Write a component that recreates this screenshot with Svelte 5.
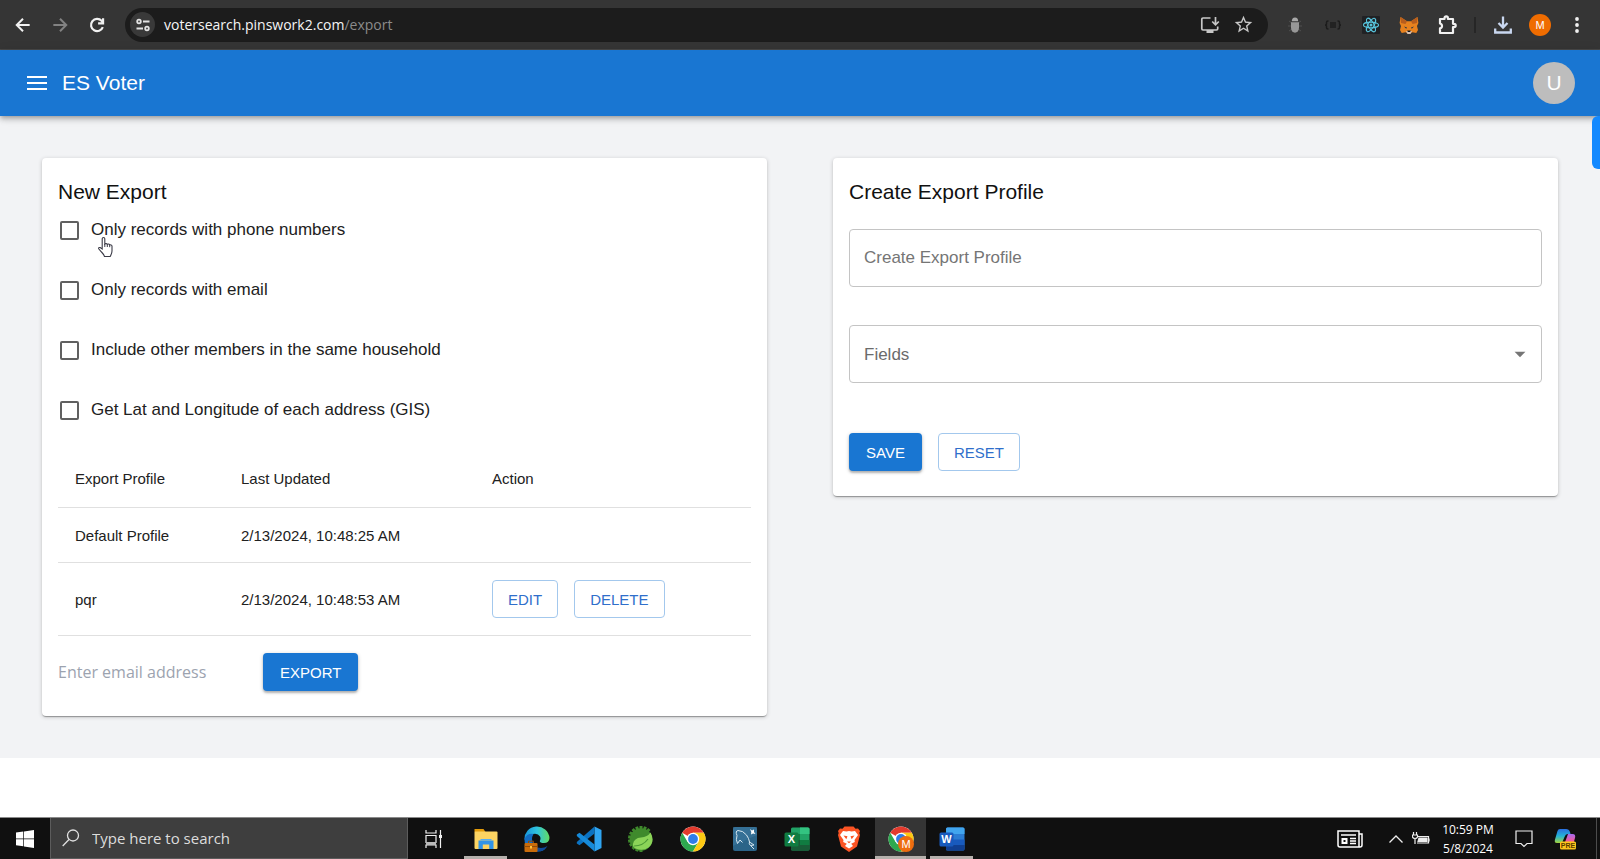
<script lang="ts">
  interface Profile {
    id: number;
    name: string;
    updated: string;
    editable: boolean;
  }

  let options = $state([
    { id: 'phone', label: 'Only records with phone numbers', checked: false },
    { id: 'email', label: 'Only records with email', checked: false },
    { id: 'household', label: 'Include other members in the same household', checked: false },
    { id: 'gis', label: 'Get Lat and Longitude of each address (GIS)', checked: false },
  ]);

  let profiles = $state<Profile[]>([
    { id: 1, name: 'Default Profile', updated: '2/13/2024, 10:48:25 AM', editable: false },
    { id: 2, name: 'pqr', updated: '2/13/2024, 10:48:53 AM', editable: true },
  ]);

  let email = $state('');
  let profileName = $state('');
  let field = $state('');

  const petals = [0, 60, 120];
  const teeth = Array.from({ length: 12 }, (_, i) => 180 + i * 20);

  function reset() {
    profileName = '';
    field = '';
  }

  function editProfile(p: Profile) {
    profileName = p.name;
  }

  function deleteProfile(id: number) {
    profiles = profiles.filter((p) => p.id !== id);
  }
</script>

{#snippet chromeLogo()}
  <circle cx="13" cy="13" r="12.5" fill="#fff" />
  <path d="M13 13 2.2 6.7A12.5 12.5 0 0 1 23.8 6.7H13z" fill="#e33b2e" />
  <path d="M2.2 6.7A12.5 12.5 0 0 0 13 25.5L18.4 16.2 13 13 7.6 16.1z" fill="#2da94f" />
  <path d="M23.8 6.7A12.5 12.5 0 0 1 13 25.5L18.5 16 13 6.8z" fill="#fdc913" />
  <circle cx="13" cy="13" r="6.2" fill="#fff" />
  <circle cx="13" cy="13" r="4.9" fill="#2f7de9" />
{/snippet}

<div class="screen">
  <header class="browser">
    <nav class="nav-buttons" aria-label="Browser">
      <button class="icon-btn" aria-label="Back">
        <svg viewBox="0 0 24 24" width="20" height="20" fill="none" stroke="#f1f1f1" stroke-width="2.4"><path d="M20 12H5M12 4.5 4.5 12l7.5 7.5" /></svg>
      </button>
      <button class="icon-btn" aria-label="Forward">
        <svg viewBox="0 0 24 24" width="20" height="20" fill="none" stroke="#828282" stroke-width="2.4"><path d="M4 12h15M12 4.5 19.5 12 12 19.5" /></svg>
      </button>
      <button class="icon-btn" aria-label="Reload">
        <svg viewBox="0 0 24 24" width="20" height="20" fill="none" stroke="#f1f1f1" stroke-width="2.6"><path d="M19 14.5A7.3 7.3 0 1 1 17.5 7l1.5 1.8M19.3 4v6h-6" /></svg>
      </button>
    </nav>
    <div class="address">
      <button class="site-info" aria-label="View site information">
        <svg viewBox="0 0 16 16" width="16" height="16" fill="none" stroke="#e3e3e3" stroke-width="1.8"><circle cx="4" cy="4.5" r="1.8" /><path d="M8 4.5h6.5M1.5 11.5H8" /><circle cx="12" cy="11.5" r="1.8" /></svg>
      </button>
      <span class="url">votersearch.pinswork2.com<span class="path">/export</span></span>
      <button class="icon-btn" aria-label="Install app">
        <svg viewBox="0 0 20 20" width="20" height="20" fill="none" stroke="#c7c7c7" stroke-width="1.7"><path d="M10.5 3H3q-1.200 0-1.200 1.200v9.600Q1.800 15 3 15h13.500q1.200 0 1.200-1.200V11.500M15.500 2v7.500M12.200 6.500l3.300 3.300 3.300-3.300" /><path d="M6.500 16.500h7" stroke-width="3" /></svg>
      </button>
      <button class="icon-btn" aria-label="Bookmark this tab">
        <svg viewBox="0 0 24 24" width="21" height="21" fill="#c7c7c7"><path d="M22 9.240l-7.190-.62L12 2 9.190 8.630 2 9.240l5.460 4.730L5.820 21 12 17.270 18.180 21l-1.630-7.030L22 9.240zM12 15.400l-3.760 2.270 1-4.280-3.320-2.880 4.380-.38L12 6.100l1.710 4.040 4.380.38-3.320 2.880 1 4.280L12 15.400z" /></svg>
      </button>
    </div>
    <div class="extensions">
      <button class="icon-btn" aria-label="Debugger">
        <svg viewBox="0 0 20 20" width="20" height="20"><path d="M4 6l3 2M16 6l-3 2M3 11h4M17 11h-4M4 16l3-2M16 16l-3-2" stroke="#505050" /><path d="M6.800 6.200a3.200 3.800 0 0 1 6.400 0z" fill="#a8a8a8" /><path d="M6 7.200h8v5.500a4 5 0 0 1-8 0z" fill="#979797" /></svg>
      </button>
      <button class="icon-btn" aria-label="JSON formatter">
        <svg viewBox="0 0 20 20" width="20" height="20" fill="none" stroke="#1c1c1c" stroke-width="1.5"><path d="M5.500 6H5q-1.500 0-1.500 1.500V9q0 1-1.500 1 1.500 0 1.500 1v1.500Q3.500 14 5 14h.5M14.500 6h.5q1.500 0 1.500 1.500V9q0 1 1.500 1-1.500 0-1.500 1v1.500q0 1.500-1.500 1.500h-.5M7 8h6M7 10h6M7 12h6" /></svg>
      </button>
      <button class="icon-btn" aria-label="React developer tools">
        <svg viewBox="0 0 18 18" width="18" height="18"><rect width="18" height="18" rx="1" fill="#202124" />
          <g fill="none" stroke="#58c4dc" stroke-width="1.1">
            {#each petals as angle}
              <ellipse cx="9" cy="9" rx="7.6" ry="2.9" transform="rotate({angle} 9 9)" />
            {/each}
          </g>
          <circle cx="9" cy="9" r="1.5" fill="#58c4dc" />
        </svg>
      </button>
      <button class="icon-btn" aria-label="Wallet">
        <svg viewBox="0 0 20 20" width="20" height="20"><path d="M1.500 2 8 6.200h4L18.500 2l.9 6-1.400 3 1 4-1.700 3-4-.8-1.800 1.400H8.500L6.700 17.200l-4 .8L1 15l1-4-1.400-3z" fill="#e8821e" /><path d="M1.500 2 8 6.200 6.500 9 2 8zM18.500 2 12 6.200 13.500 9 18 8z" fill="#b85d1c" /><path d="m5 11.500 3 1-.8 1.200zM15 11.500l-3 1 .8 1.200z" fill="#233447" /><path d="M7 16h6l-1.500 3h-3z" fill="#d5bfb2" /><path d="M8.300 15.500h3.400l-.5 1.500H8.800z" fill="#161616" /></svg>
      </button>
      <button class="icon-btn" aria-label="Extensions">
        <svg viewBox="0 0 22 22" width="22" height="22" fill="none" stroke="#f1f1f1" stroke-width="2.2" stroke-linejoin="round"><path d="M4 5h4.500V4a1.700 1.700 0 0 1 3.400 0v1H17v4.800h1a1.700 1.700 0 0 1 0 3.400h-1V19H4v-4.600a2.500 2.500 0 0 0 0-4.900z" /></svg>
      </button>
    </div>
    <span class="divider"></span>
    <div class="browser-menu">
      <button class="icon-btn" aria-label="Downloads">
        <svg viewBox="0 0 20 20" width="20" height="20" fill="none" stroke="#c9d7f0" stroke-width="2.3"><path d="M10 1.500v10.500M5.500 8l4.500 4.500L14.500 8M2.200 13.500v4h15.600v-4" /></svg>
      </button>
      <button class="profile" aria-label="Profile">M</button>
      <button class="icon-btn" aria-label="More">
        <svg viewBox="0 0 20 20" width="20" height="20" fill="#f1f1f1"><circle cx="10" cy="4" r="1.900" /><circle cx="10" cy="10" r="1.900" /><circle cx="10" cy="16" r="1.900" /></svg>
      </button>
    </div>
  </header>

  <header class="app-bar">
    <button class="icon-btn" aria-label="Open menu">
      <svg viewBox="0 0 20 14" width="20" height="14" fill="#fff"><path d="M0 0h20v2H0zM0 6h20v2H0zM0 12h20v2H0z" /></svg>
    </button>
    <h1>ES Voter</h1>
    <button class="user" aria-label="User account">U</button>
    <span class="side-tab"></span>
  </header>

  <main>
    <section class="card">
      <h2>New Export</h2>
      <div class="options">
        {#each options as opt (opt.id)}
          <label class="option">
            <input type="checkbox" bind:checked={opt.checked} />
            <span>{opt.label}</span>
          </label>
        {/each}
        <svg class="pointer" viewBox="0 0 17 22" width="17" height="22"><path d="M5.200 13V2.800a1.300 1.300 0 0 1 2.600 0V8q1.300-1.300 2.500.4 1.300-1 2.400.5 1.700-.6 2.300 1v5q0 2.500-1.800 5.600H7.500q-1-2.500-3-4.500L1.700 12.800q-.5-1.600 1.500-1.300z" fill="#fff" stroke="#3a3a46" stroke-width="1.1" /><path d="M7.800 8v3M10.300 8.400V11M12.700 9v2.200" stroke="#3a3a46" /></svg>
      </div>

      <table>
        <thead>
          <tr>
            <th class="col-name">Export Profile</th>
            <th class="col-date">Last Updated</th>
            <th>Action</th>
          </tr>
        </thead>
        <tbody>
          {#each profiles as p (p.id)}
            <tr>
              <td>{p.name}</td>
              <td>{p.updated}</td>
              <td>
                {#if p.editable}
                  <div class="actions">
                    <button class="btn outlined" onclick={() => editProfile(p)}>EDIT</button>
                    <button class="btn outlined" onclick={() => deleteProfile(p.id)}>DELETE</button>
                  </div>
                {/if}
              </td>
            </tr>
          {/each}
        </tbody>
      </table>

      <form class="export-form" onsubmit={(e) => e.preventDefault()}>
        <input type="email" bind:value={email} placeholder="Enter email address" aria-label="Email address" />
        <button class="btn contained">EXPORT</button>
      </form>
    </section>

    <section class="card">
      <h2>Create Export Profile</h2>
      <form class="profile-form" onsubmit={(e) => e.preventDefault()}>
        <input class="field" type="text" bind:value={profileName} placeholder="Create Export Profile" aria-label="Profile name" />
        <div class="select-wrap">
          <select class="field" bind:value={field} aria-label="Fields">
            <option value="">Fields</option>
          </select>
          <svg class="caret" viewBox="0 0 24 24" width="26" height="26" fill="#757575"><path d="M7 10l5 5 5-5z" /></svg>
        </div>
        <div class="actions">
          <button class="btn contained">SAVE</button>
          <button class="btn outlined" type="button" onclick={reset}>RESET</button>
        </div>
      </form>
    </section>
  </main>

  <footer class="taskbar">
    <button class="start" aria-label="Start">
      <svg viewBox="0 0 18 18" width="18" height="18" fill="#fff"><path d="M0 2.600 7.300 1.600v7H0zM8 1.500 18 0v8.600H8zM0 9.300h7.300v7L0 15.300zM8 9.300h10V18L8 16.500z" /></svg>
    </button>
    <label class="search">
      <svg viewBox="0 0 18 18" width="18" height="18" fill="none" stroke="#e0e0e0" stroke-width="1.3"><circle cx="11" cy="6.5" r="5.5" /><path d="M7 10.500.7 17" /></svg>
      <input type="text" placeholder="Type here to search" aria-label="Search Windows" />
    </label>
    <div class="apps">
      <button class="app" aria-label="Task view">
        <svg viewBox="0 0 18 18" width="18" height="18" fill="none" stroke="#f0f0f0" stroke-width="1.2"><path d="M1 0v3h10V0M1 18v-3h10v3M1 5.500h10v7H1zM15.500 0v18" /><path d="M1 12h10v3H1z" fill="#bbb" stroke="none" /><path d="M14 5h3v3h-3z" fill="#f0f0f0" stroke="none" /></svg>
      </button>
      <button class="app open" aria-label="File Explorer">
        <svg viewBox="0 0 26 26" width="26" height="26"><path d="M1.500 3h9l2 3H1.500z" fill="#e39b0a" /><rect x="1.500" y="5.500" width="23" height="17.500" rx="1" fill="#fcd462" /><path d="M5.500 23v-8.500h15V23h-4.300v-4.500H9.800V23z" fill="#3294e6" /><path d="M7.500 14.500h11V13h-11z" fill="#56aef3" /></svg>
      </button>
      <button class="app" aria-label="Edge">
        <svg viewBox="0 0 26 26" width="26" height="26">
          <defs><linearGradient id="edge"><stop offset="0" stop-color="#1895dc" /><stop offset=".5" stop-color="#2fc3df" /><stop offset="1" stop-color="#62dd61" /></linearGradient></defs>
          <path d="M.5 14A12.500 12.500 0 1 1 25.500 12q-.3 5-5.500 5-5 0-4-2.500 1-2 0-4Q14 7 9 8 2 10 .5 14z" fill="url(#edge)" />
          <path d="M.5 13Q3 7 9.500 8q-3 5 0 10.500t12.500 4Q18 26 12.500 25.500.5 25 .5 13z" fill="#126dc4" /><path d="M9 14q0 8 8 8 3.500 0 6.500-2-3 5.500-10 5.500Q6 22 9 14z" fill="#104a99" />
          <rect x=".5" y="17" width="13" height="9" rx="1" fill="#c96c0b" /><path d="M4.500 17v-1.800h5V17M.5 20.500h13" stroke="#8e4a09" fill="none" /><path d="M6 20h2v2.500H6z" fill="#ffc23c" />
        </svg>
      </button>
      <button class="app" aria-label="Visual Studio Code">
        <svg viewBox="0 0 26 26" width="26" height="26"><path d="M18.500.5 25.500 4v18l-7 3.500z" fill="#2fa5f2" /><path d="M18.500.5v7L3.500 19.200.8 17.500v-1.400z" fill="#0b72c1" /><path d="M18.500 25.500v-7L3.500 6.800.8 8.500v1.400z" fill="#168ad9" /></svg>
      </button>
      <button class="app" aria-label="Spring Tools">
        <svg viewBox="0 0 26 26" width="26" height="26"><g fill="#3f8a2c">
            {#each teeth as angle}
              <rect x="11.5" y="0" width="3" height="5" transform="rotate({angle} 13 13)" />
            {/each}
          </g><circle cx="13" cy="13.500" r="11.300" fill="#3f8a2c" /><path d="M22.500 6.500q5 9-2 15-5.500 4-13 1-3-1-2.500-4.500 1-6 8-6.500 6.500-.5 9.500-5z" fill="#8bd458" /><path d="M6 20q9 0 14-7" stroke="#4c9a35" stroke-width="1.2" fill="none" /></svg>
      </button>
      <button class="app" aria-label="Chrome">
        <svg viewBox="0 0 26 26" width="26" height="26">{@render chromeLogo()}</svg>
      </button>
      <button class="app" aria-label="MySQL Workbench">
        <svg viewBox="0 0 26 26" width="26" height="26"><rect x="1" y="1" width="24" height="24" rx="2" fill="#2b6488" /><path d="M1 1h24v8L1 20z" fill="#3f7ca3" opacity=".5" /><path d="M5.500 17.500Q3.500 14 5 9.500 3 5 6 4.500q5 0 8.500 4.500 2.500 3.500 3 7l4.500 3-3.500.5 3.500 3.500M5.500 17.500l2.500-3.500 2.500 2.500M17.500 16q-1 2 1 3.500" stroke="#d5e6ef" stroke-width="1" fill="none" /><path d="m18 3 2 1.500 2-1v2.500l1.500 2-2.500-.5-2 1 .3-2.500z" fill="#fff" /></svg>
      </button>
      <button class="app" aria-label="Excel">
        <svg viewBox="0 0 26 26" width="26" height="26"><rect x="7" y="1.500" width="18.500" height="23" rx="1.500" fill="#21a366" /><path d="M16 1.500h8q1.500 0 1.500 1.500v5H16z" fill="#33c481" /><path d="M7 8h9v6H7z" fill="#107c41" /><path d="M7 14h18.500v9q0 1.500-1.500 1.500H8.500Q7 24.500 7 23z" fill="#185c37" /><path d="M16 14h9.500v5H16z" fill="#107c41" /><rect x=".5" y="6.500" width="14" height="14" rx="1.500" fill="#107c41" /><text class="badge-text" x="7.500" y="17">X</text></svg>
      </button>
      <button class="app" aria-label="Brave">
        <svg viewBox="0 0 26 26" width="26" height="26"><path d="M8.500.5h9l2 2.300 2.500-.3L24 5l-.7 2 .7 2-3 11.500L13 26l-8-5.500L2 9l.7-2L2 5l2-2.500 2.500.3z" fill="#fb5424" /><path d="m7 5 3.500.5L13 5l2.500.5L19 5l3 4-3.500 5 .3 2-3.600 1.700L17 20l-4 2.500L9 20l1.800-2.300L7.200 16l.3-2L4 9z" fill="#fff" /><path d="m7.500 9.500 4 .8-1.200 3zM18.500 9.500l-4 .8 1.200 3zM11 15.500h4l-2 1.800z" fill="#fb5424" /></svg>
      </button>
      <button class="app open active" aria-label="Chrome, ES Voter">
        <svg viewBox="0 0 26 26" width="26" height="26">{@render chromeLogo()}<circle cx="18" cy="18" r="8" fill="#ee6c10" /><text class="badge-text light" x="18" y="22">M</text></svg>
      </button>
      <button class="app open" aria-label="Word">
        <svg viewBox="0 0 26 26" width="26" height="26"><rect x="7" y="1.500" width="18.500" height="23" rx="1.500" fill="#2b7cd3" /><path d="M7 8V3q0-1.500 1.500-1.500H24q1.500 0 1.500 1.500v5z" fill="#41a5ee" /><path d="M7 13.500h18.500V19H7z" fill="#185abd" /><path d="M7 19h18.500v4q0 1.500-1.500 1.500H8.500Q7 24.500 7 23z" fill="#103f91" /><rect x=".5" y="6.500" width="14" height="14" rx="1.500" fill="#185abd" /><text class="badge-text" x="7.500" y="17">W</text></svg>
      </button>
    </div>
    <div class="tray">
      <button class="tray-btn news" aria-label="News">
        <svg viewBox="0 0 26 18" width="26" height="18" fill="none" stroke="#fff" stroke-width="1.5"><path d="M1 1h21v16H3q-2 0-2-2zM22 4h3v11q0 2-2 2h-2" /><path d="M4 5h15M13 8.500h6M13 11h6M13 13.500h6" /><path d="M5.500 9h4v4h-4z" stroke-width="2" /></svg>
      </button>
      <button class="tray-btn" aria-label="Show hidden icons">
        <svg viewBox="0 0 14 8" width="14" height="8" fill="none" stroke="#eee" stroke-width="1.3"><path d="m.5 7.500 6.500-6.500 6.500 6.500" /></svg>
      </button>
      <button class="tray-btn" aria-label="Battery">
        <svg viewBox="0 0 18 13" width="18" height="13" fill="none" stroke="#eee" stroke-width="1.2"><path d="M1.500 0v3M4.500 0v3M.5 3h5v2Q5 6.500 3 6.500T.5 5zM3 6.500V12" /><path d="M6 4.500h10.500V11H5" /><path d="M7 6h8v3.500H6zM17 6.500v3" fill="#eee" /></svg>
      </button>
      <button class="clock"><span>10:59 PM</span><span>5/8/2024</span></button>
      <button class="tray-btn note" aria-label="Notifications">
        <svg viewBox="0 0 18 18" width="18" height="18" fill="none" stroke="#f0f0f0" stroke-width="1.2"><path d="M1 1h16v12.500h-5L9 16.500l-3-3H1z" /></svg>
      </button>
      <button class="tray-btn copilot" aria-label="Copilot preview">
        <svg viewBox="0 0 22 22" width="22" height="22">
          <defs>
            <linearGradient id="cpa" x2="0" y2="1"><stop offset="0" stop-color="#2b6fe0" /><stop offset=".5" stop-color="#23b3d8" /><stop offset="1" stop-color="#a5d43b" /></linearGradient>
            <linearGradient id="cpb" x2="0" y2="1"><stop offset="0" stop-color="#a66bf2" /><stop offset=".6" stop-color="#ee5a9b" /><stop offset="1" stop-color="#f98a4b" /></linearGradient>
          </defs>
          <path d="M6 1h6q3 0 4 3l.5 2h-3q-2 0-3 3L8 15H3Q0 15 1 11.500L3.500 3Q4 1 6 1z" fill="url(#cpa)" />
          <path d="M14 6h4.500Q22 6 21 10l-2 7h-9z" fill="url(#cpb)" />
          <rect x="6" y="13.500" width="16" height="8" rx="1.500" fill="#fdc41b" /><text class="pre" x="14" y="20">PRE</text>
        </svg>
      </button>
    </div>
  </footer>
</div>

<style>
  :global(body) { margin: 0; background: #fff; }

  .screen {
    min-height: 100vh; display: flex; flex-direction: column;
    font-family: "Liberation Sans", Arial, sans-serif; color: #212121;
  }

  button { font-family: inherit; padding: 0; border: none; background: none; color: inherit; cursor: pointer; }
  input, select { font-family: inherit; box-sizing: border-box; outline: none; }
  svg { display: block; }
  h1, h2 { margin: 0; font-weight: 400; }

  .icon-btn {
    width: 24px; height: 24px; flex-shrink: 0;
    display: flex; align-items: center; justify-content: center;
  }

  /* browser toolbar */
  .browser {
    display: flex; align-items: center; height: 50px; padding: 0 11px;
    box-sizing: border-box; background: #353535; border-bottom: 1px solid #4a4a4a;
  }
  .nav-buttons { display: flex; gap: 13px; padding-right: 16px; }
  .address {
    flex: 1; display: flex; align-items: center; gap: 9px; height: 34px;
    box-sizing: border-box; padding: 0 13px 0 5px; border-radius: 17px; background: #1c1c1c;
  }
  .site-info {
    width: 25px; height: 25px; border-radius: 50%; background: #393939;
    display: flex; align-items: center; justify-content: center;
  }
  .url { flex: 1; font-family: "Open Sans", "Noto Sans", sans-serif; font-size: 14px; color: #f5f5f5; }
  .url .path { color: #8b8b8b; }
  .extensions { display: flex; gap: 14px; padding-left: 15px; }
  .divider { width: 2px; height: 16px; margin: 0 15px; background: #262626; }
  .browser-menu { display: flex; align-items: center; gap: 13px; }
  .profile {
    width: 22px; height: 22px; margin: 0 1px; border-radius: 50%;
    background: #ef6c00; color: #fff; font-size: 11px;
  }

  /* app */
  .app-bar {
    position: relative; z-index: 1; display: flex; align-items: center; gap: 13px;
    height: 66px; padding: 0 25px; background: #1976d2; color: #fff;
    box-shadow: 0 2px 4px -1px rgba(0, 0, 0, 0.2), 0 4px 5px rgba(0, 0, 0, 0.14), 0 1px 10px rgba(0, 0, 0, 0.12);
  }
  h1 { flex: 1; font-size: 21px; line-height: 34px; }
  .user { width: 42px; height: 42px; border-radius: 50%; background: #bdbdbd; font-size: 21px; }
  .side-tab {
    position: absolute; top: 100%; right: 0; width: 8px; height: 53px;
    border-radius: 6px 0 0 6px; background: #1389ff;
  }

  main {
    display: grid; grid-template-columns: 1fr 1fr; gap: 66px; align-items: start;
    padding: 42px; background: #f2f3f5;
  }
  .card {
    padding: 17px 16px 25px; border-radius: 4px; background: #fff;
    box-shadow: 0 2px 1px -1px rgba(0, 0, 0, 0.2), 0 1px 1px rgba(0, 0, 0, 0.14), 0 1px 4px rgba(0, 0, 0, 0.2);
  }
  h2 { font-size: 21px; line-height: 34px; color: #111; }

  .options { position: relative; display: flex; flex-direction: column; gap: 18px; padding-bottom: 18px; }
  .option { display: flex; align-items: center; gap: 12px; height: 42px; padding-left: 2px; font-size: 17px; }
  .option input {
    appearance: none; width: 19px; height: 19px; margin: 0;
    border: 2px solid #606060; border-radius: 2px;
  }
  .option input:checked { border-color: #1976d2; background: #1976d2; }
  .pointer { position: absolute; left: 39px; top: 27px; pointer-events: none; }

  table { width: 100%; border-collapse: collapse; font-size: 15px; }
  th, td { height: 54px; padding: 0 17px; border-bottom: 1px solid #e0e0e0; text-align: left; font-weight: 400; }
  th { height: 58px; }
  .col-name { width: 132px; }
  .col-date { width: 217px; }
  .actions { display: flex; gap: 16px; }
  td .actions { padding: 17px 0; }

  .btn { height: 38px; padding: 0 17px; border-radius: 4px; font-size: 15px; }
  .outlined { border: 1px solid #a3c8ed; padding: 0 15px; color: #2f6fcb; }
  .contained {
    background: #1976d2; color: #fff;
    box-shadow: 0 2px 2px rgba(0, 0, 0, 0.2), 0 1px 4px rgba(0, 0, 0, 0.2);
  }

  .export-form { display: flex; align-items: center; gap: 17px; padding-top: 17px; }
  .export-form input {
    width: 188px; padding: 0; border: none; background: none;
    font-family: "Open Sans", "Noto Sans", sans-serif; font-size: 16px;
  }
  .export-form input::placeholder { color: #9ca3af; }

  .profile-form { display: flex; flex-direction: column; padding-top: 20px; }
  .field {
    width: 100%; height: 58px; padding: 0 14px; border: 1px solid #c4c4c4;
    border-radius: 4px; background: #fff; font-size: 17px; color: #6b6b6b;
  }
  .field::placeholder { color: #757575; opacity: 1; }
  select.field { appearance: none; }
  .select-wrap { position: relative; padding: 38px 0 50px; }
  .caret { position: absolute; right: 9px; top: 54px; pointer-events: none; }

  /* windows taskbar */
  .taskbar {
    margin-top: auto; display: flex; height: 42px; box-sizing: border-box;
    border-top: 1px solid #8a8a8a; background: #101010; color: #fff;
    font-family: "Open Sans", "Noto Sans", sans-serif;
  }
  .start { width: 50px; display: flex; align-items: center; justify-content: center; }
  .search {
    width: 358px; display: flex; align-items: center; gap: 12px; padding-left: 11px;
    box-sizing: border-box; border: 1px solid #5c5c5c; border-top: none; background: #3e3e3e;
  }
  .search input { flex: 1; padding: 0; border: none; background: none; font-size: 15px; color: #fff; }
  .search input::placeholder { color: #dcdcdc; opacity: 1; }
  .apps { display: flex; }
  .app {
    width: 52px; display: flex; align-items: center; justify-content: center;
    box-sizing: border-box; border-top: 3px solid transparent; border-bottom: 3px solid transparent;
  }
  .app.open { width: 43px; margin: 0 4px; border-bottom-color: #b5b0ac; }
  .app.active { width: 51px; margin: 0; background: #353535; border-top-color: #353535; }
  .badge-text { font-family: "Liberation Sans", sans-serif; font-size: 11px; font-weight: 700; fill: #fff; text-anchor: middle; }
  .badge-text.light { font-weight: 400; }

  .tray { flex: 1; display: flex; justify-content: flex-end; border-right: 1px solid #4c4c4c; margin-right: 3px; }
  .tray-btn { width: 25px; display: flex; align-items: center; justify-content: center; }
  .tray-btn.news { width: 34px; margin-right: 16px; }
  .clock {
    width: 70px; display: flex; flex-direction: column; align-items: center; justify-content: center;
    font-size: 12px; line-height: 19px;
  }
  .tray-btn.note { width: 42px; }
  .tray-btn.copilot { width: 40px; margin-right: 11px; }
  .pre { font-family: "Liberation Sans", sans-serif; font-size: 7px; font-weight: 700; fill: #5a3c00; text-anchor: middle; }
</style>
